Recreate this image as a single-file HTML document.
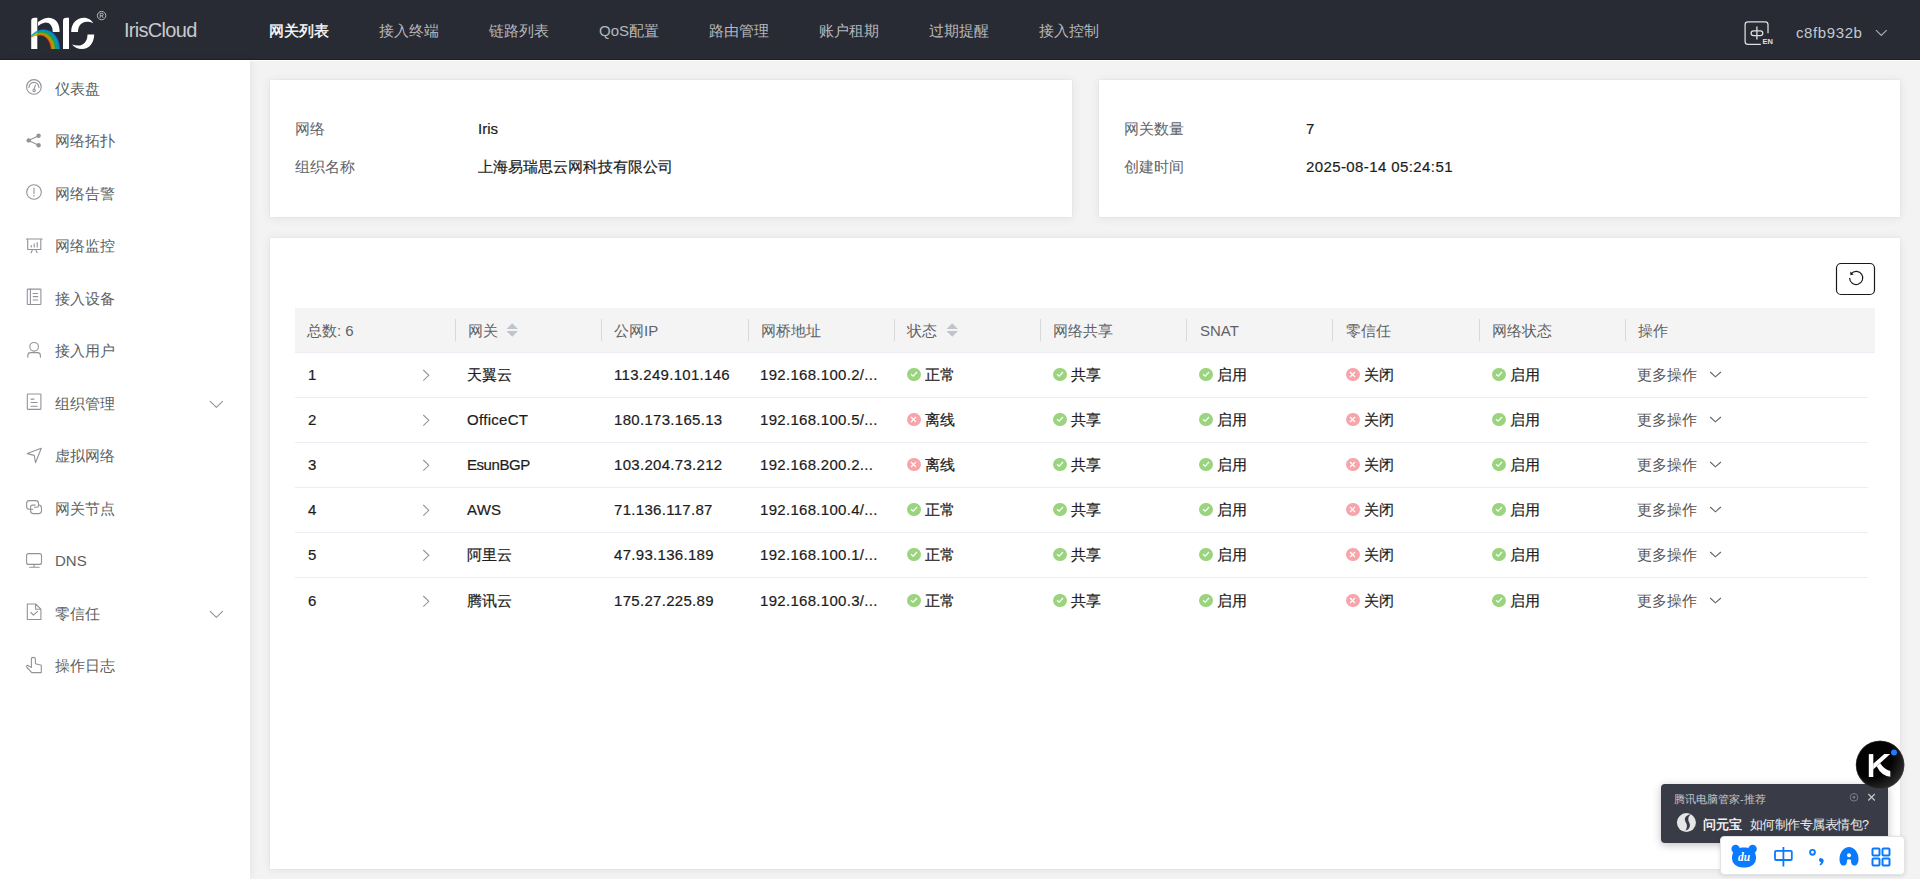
<!DOCTYPE html><html><head><meta charset="utf-8"><style>
*{box-sizing:border-box;margin:0;padding:0}
html,body{width:1920px;height:879px;overflow:hidden}
body{font-family:"Liberation Sans",sans-serif;font-size:15px;color:#303133;background:#f3f3f4;position:relative}
div,span{white-space:nowrap}
svg{position:absolute;overflow:visible}
#hdr{position:absolute;left:0;top:0;width:1920px;height:60px;background:#282b33;border-bottom:1px solid #1e2027}
#wl{position:absolute;left:250px;top:60px;width:1670px;height:1px;background:#fff}
#side{position:absolute;left:0;top:60px;width:250px;height:819px;background:#fff;box-shadow:2px 0 8px rgba(0,0,0,.06)}
.card{position:absolute;background:#fff;box-shadow:0 0 0 1px rgba(110,120,210,.045), 0 1px 10px rgba(0,0,0,.075)}
.t{position:absolute;height:20px;line-height:20px}
.lbl{color:#606266}
.val{color:#1c1c1c;-webkit-text-stroke:0.2px #1c1c1c}
.th{color:#606266}
.td{color:#1c1c1c;-webkit-text-stroke:0.2px #1c1c1c}
.sep{position:absolute;top:319px;width:1px;height:22px;background:#d9d9d9}
.rowb{position:absolute;left:295px;width:1573px;height:1px;background:#ebeef5}
.si{position:absolute;width:13.5px;height:13.5px;border-radius:50%}
.ok{background:#9bd47e}
.no{background:#f7a5aa}
</style></head><body>
<div id="hdr"></div><div id="wl"></div><div id="side"></div>
<div class="card" style="left:270px;top:80px;width:802px;height:137px"></div>
<div class="card" style="left:1099px;top:80px;width:801px;height:137px"></div>
<div class="card" style="left:270px;top:238px;width:1630px;height:631px"></div>
<svg style="left:0;top:0" width="120" height="60" viewBox="0 0 120 60">
<defs><radialGradient id="rb" cx="39" cy="47" r="21" gradientUnits="userSpaceOnUse">
<stop offset="0.56" stop-color="#ff4d00"/><stop offset="0.64" stop-color="#f39a00"/><stop offset="0.72" stop-color="#9cc41c"/><stop offset="0.8" stop-color="#22a845"/><stop offset="0.88" stop-color="#06a9c9"/><stop offset="0.95" stop-color="#0a8ee0"/><stop offset="1" stop-color="#1d3f9e"/></radialGradient></defs>
<g fill="#fff">
<path d="M31.2,49 L31.2,21 Q31.2,17.7 34.5,17.7 L37.3,17.7 L37.3,49 Z"/>
<path d="M38,32 L38,22 Q44,17.7 49,17.7 Q59.6,18.5 59.6,32 L52.8,32 Q52.5,22.5 45.5,22.5 Q41,23 38,26 Z"/>
<path d="M63,49 L63,21 Q63,17.7 66.3,17.7 L69,17.7 L69,49 Z"/>
<path d="M71.2,32 C71.2,23 77,17.7 84,17.7 C88,17.7 91.5,20 93.2,23.2 C91,22.2 89,21.8 87,21.8 C81.5,21.8 78,26 78,32 Z"/>
<path d="M94.2,34.5 C94.2,43 89,49 82,49 C77.5,49 74,47 72,44.5 C74,45.3 76,45.6 78,45.6 C84,45.6 87.5,41 87.5,34.5 Z"/>
</g>
<path d="M31.00,35.80 C35.00,31.00 40.00,29.40 44.00,29.40 C53.00,29.50 60.00,38.00 60.00,49.00 L59.35,49.00 C59.35,38.29 52.50,29.93 43.75,29.82 C39.75,29.81 34.89,31.36 31.00,35.91 Z" fill="#0f5bbc" stroke="#0f5bbc" stroke-width="0.15"/>
<path d="M31.00,35.91 C34.89,31.36 39.75,29.81 43.75,29.82 C52.50,29.93 59.35,38.29 59.35,49.00 L58.70,49.00 C58.70,38.57 52.00,30.36 43.50,30.24 C39.50,30.23 34.79,31.71 31.00,36.01 Z" fill="#0094e5" stroke="#0094e5" stroke-width="0.15"/>
<path d="M31.00,36.01 C34.79,31.71 39.50,30.23 43.50,30.24 C52.00,30.36 58.70,38.57 58.70,49.00 L58.05,49.00 C58.05,38.86 51.50,30.79 43.25,30.66 C39.25,30.64 34.68,32.07 31.00,36.12 Z" fill="#00a0e0" stroke="#00a0e0" stroke-width="0.15"/>
<path d="M31.00,36.12 C34.68,32.07 39.25,30.64 43.25,30.66 C51.50,30.79 58.05,38.86 58.05,49.00 L57.40,49.00 C57.40,39.14 51.00,31.21 43.00,31.09 C39.00,31.06 34.57,32.43 31.00,36.23 Z" fill="#00acdb" stroke="#00acdb" stroke-width="0.15"/>
<path d="M31.00,36.23 C34.57,32.43 39.00,31.06 43.00,31.09 C51.00,31.21 57.40,39.14 57.40,49.00 L56.75,49.00 C56.75,39.43 50.50,31.64 42.75,31.51 C38.75,31.47 34.46,32.79 31.00,36.34 Z" fill="#04b3c7" stroke="#04b3c7" stroke-width="0.15"/>
<path d="M31.00,36.34 C34.46,32.79 38.75,31.47 42.75,31.51 C50.50,31.64 56.75,39.43 56.75,49.00 L56.10,49.00 C56.10,39.71 50.00,32.07 42.50,31.93 C38.50,31.89 34.36,33.14 31.00,36.44 Z" fill="#13b090" stroke="#13b090" stroke-width="0.15"/>
<path d="M31.00,36.44 C34.36,33.14 38.50,31.89 42.50,31.93 C50.00,32.07 56.10,39.71 56.10,49.00 L55.45,49.00 C55.45,40.00 49.50,32.50 42.25,32.35 C38.25,32.30 34.25,33.50 31.00,36.55 Z" fill="#21ad59" stroke="#21ad59" stroke-width="0.15"/>
<path d="M31.00,36.55 C34.25,33.50 38.25,32.30 42.25,32.35 C49.50,32.50 55.45,40.00 55.45,49.00 L54.80,49.00 C54.80,40.29 49.00,32.93 42.00,32.77 C38.00,32.71 34.14,33.86 31.00,36.66 Z" fill="#3eb137" stroke="#3eb137" stroke-width="0.15"/>
<path d="M31.00,36.66 C34.14,33.86 38.00,32.71 42.00,32.77 C49.00,32.93 54.80,40.29 54.80,49.00 L54.15,49.00 C54.15,40.57 48.50,33.36 41.75,33.19 C37.75,33.13 34.04,34.21 31.00,36.76 Z" fill="#6bba29" stroke="#6bba29" stroke-width="0.15"/>
<path d="M31.00,36.76 C34.04,34.21 37.75,33.13 41.75,33.19 C48.50,33.36 54.15,40.57 54.15,49.00 L53.50,49.00 C53.50,40.86 48.00,33.79 41.50,33.61 C37.50,33.54 33.93,34.57 31.00,36.87 Z" fill="#98c31a" stroke="#98c31a" stroke-width="0.15"/>
<path d="M31.00,36.87 C33.93,34.57 37.50,33.54 41.50,33.61 C48.00,33.79 53.50,40.86 53.50,49.00 L52.85,49.00 C52.85,41.14 47.50,34.21 41.25,34.04 C37.25,33.96 33.82,34.93 31.00,36.98 Z" fill="#beb70f" stroke="#beb70f" stroke-width="0.15"/>
<path d="M31.00,36.98 C33.82,34.93 37.25,33.96 41.25,34.04 C47.50,34.21 52.85,41.14 52.85,49.00 L52.20,49.00 C52.20,41.43 47.00,34.64 41.00,34.46 C37.00,34.37 33.71,35.29 31.00,37.09 Z" fill="#e2a205" stroke="#e2a205" stroke-width="0.15"/>
<path d="M31.00,37.09 C33.71,35.29 37.00,34.37 41.00,34.46 C47.00,34.64 52.20,41.43 52.20,49.00 L51.55,49.00 C51.55,41.71 46.50,35.07 40.75,34.88 C36.75,34.79 33.61,35.64 31.00,37.19 Z" fill="#f78300" stroke="#f78300" stroke-width="0.15"/>
<path d="M31.00,37.19 C33.61,35.64 36.75,34.79 40.75,34.88 C46.50,35.07 51.55,41.71 51.55,49.00 L50.90,49.00 C50.90,42.00 46.00,35.50 40.50,35.30 C36.50,35.20 33.50,36.00 31.00,37.30 Z" fill="#fc5a00" stroke="#fc5a00" stroke-width="0.15"/>
<circle cx="101.6" cy="15.6" r="4.2" fill="none" stroke="#d0d0d0" stroke-width="0.85"/>
<path d="M100.2,18 L100.2,13.3 L102,13.3 Q103.2,13.3 103.2,14.55 Q103.2,15.8 102,15.8 L100.2,15.8 M101.9,15.8 L103.3,18" fill="none" stroke="#d0d0d0" stroke-width="0.75"/>
</svg>
<div class="t " style="left:124px;top:20.5px;font-size:20px;color:#c8c9cc;height:30px;line-height:30px;top:15px;letter-spacing:-0.7px">IrisCloud</div>
<div class="t " style="left:269px;top:21px;color:#fff;-webkit-text-stroke:0.35px #fff">网关列表</div>
<div class="t " style="left:379px;top:21px;color:#b6b8bd">接入终端</div>
<div class="t " style="left:489px;top:21px;color:#b6b8bd">链路列表</div>
<div class="t " style="left:599px;top:21px;color:#b6b8bd">QoS配置</div>
<div class="t " style="left:709px;top:21px;color:#b6b8bd">路由管理</div>
<div class="t " style="left:819px;top:21px;color:#b6b8bd">账户租期</div>
<div class="t " style="left:929px;top:21px;color:#b6b8bd">过期提醒</div>
<div class="t " style="left:1039px;top:21px;color:#b6b8bd">接入控制</div>
<svg style="left:1740px;top:18px" width="36" height="30" viewBox="1740 18 36 30">
<path d="M1760.8,44.3 L1748,44.3 Q1745.1,44.3 1745.1,41.4 L1745.1,24.6 Q1745.1,21.8 1748,21.8 L1765.1,21.8 Q1768,21.8 1768,24.6 L1768,33.2" fill="none" stroke="#e0e0e0" stroke-width="1.25"/>
<rect x="1751.1" y="30.8" width="11.7" height="4.8" rx="2.4" fill="none" stroke="#e0e0e0" stroke-width="1.25"/>
<line x1="1756.9" y1="26.4" x2="1756.9" y2="39.5" stroke="#e0e0e0" stroke-width="1.3"/>
<text x="1762.6" y="44.3" font-size="7.5" font-weight="bold" fill="#e0e0e0" font-family="Liberation Sans">EN</text>
</svg>
<div class="t " style="left:1796px;top:22.5px;color:#c5c8d0;letter-spacing:0.6px">c8fb932b</div>
<svg style="left:1870px;top:25px" width="20" height="15" viewBox="1870 25 20 15"><path d="M1876,30.2 L1881.3,35.4 L1886.7,30.2" fill="none" stroke="#a9b0c0" stroke-width="1.1"/></svg>
<div class="t " style="left:55px;top:79px;color:#5d5f63">仪表盘</div>
<div class="t " style="left:55px;top:131px;color:#5d5f63">网络拓扑</div>
<div class="t " style="left:55px;top:184px;color:#5d5f63">网络告警</div>
<div class="t " style="left:55px;top:236px;color:#5d5f63">网络监控</div>
<div class="t " style="left:55px;top:289px;color:#5d5f63">接入设备</div>
<div class="t " style="left:55px;top:341px;color:#5d5f63">接入用户</div>
<div class="t " style="left:55px;top:394px;color:#5d5f63">组织管理</div>
<div class="t " style="left:55px;top:446px;color:#5d5f63">虚拟网络</div>
<div class="t " style="left:55px;top:499px;color:#5d5f63">网关节点</div>
<div class="t " style="left:55px;top:550.5px;color:#5d5f63">DNS</div>
<div class="t " style="left:55px;top:604px;color:#5d5f63">零信任</div>
<div class="t " style="left:55px;top:656px;color:#5d5f63">操作日志</div>
<svg style="left:0;top:60px" width="250" height="640" viewBox="0 60 250 640">
<g fill="none" stroke="#919399" stroke-width="1.1" stroke-linecap="round" stroke-linejoin="round">
<circle cx="33.9" cy="86.9" r="7.3"/>
<path d="M29,87.5 A4.95,5.1 0 0 1 38.9,87.5"/><path d="M34,89.2 L35.4,85.1"/><circle cx="34.1" cy="90.4" r="1.2"/>
<path d="M38.6,135.7 L28.6,140.4 L38.6,145.3"/>
<circle cx="34" cy="192" r="7.3"/><path d="M34,188 L34,193.5"/>
<path d="M26.3,239 L42.2,239 M27.7,239 L27.7,249.5 L40.8,249.5 L40.8,239 M31.2,252.8 L32.5,249.6 M37,252.8 L35.7,249.6 M31.3,247 L31.3,245.5 M34.2,247 L34.2,243.8 M37.2,247 L37.2,242.5"/>
<rect x="27.3" y="289.1" width="13.6" height="15.4" rx="0.6"/><path d="M30.4,289.1 L30.4,304.5 M33.2,293.5 L37.7,293.5 M33.2,296.6 L37.7,296.6 M33.2,300 L37.7,300"/>
<circle cx="34.1" cy="346.8" r="4.3"/><path d="M27.8,357.3 L27.8,355.5 Q27.8,352.6 30.8,352.6 L37.4,352.6 Q40.4,352.6 40.4,355.5 L40.4,357.3"/>
<rect x="27.3" y="394" width="13.6" height="15.4" rx="0.6"/><path d="M31,399.1 L34,399.1 M31,402.5 L37.2,402.5 M31,406.2 L37.2,406.2"/>
<path d="M27.3,453.6 L41.3,448.2 L35.5,462.7 L34.2,455.4 Z"/>
<path d="M32.8,509.3 L29.5,509.3 Q26.6,509.3 26.6,506.4 L26.6,503.4 Q26.6,500.6 29.5,500.6 L35.6,500.6 Q38.5,500.6 38.5,503.4 L38.5,505.6 Q38.5,507.3 36.8,507.3 L34.5,507.3"/>
<path d="M35.2,505.1 L32.6,505.1 Q30.6,505.1 30.6,507.1 L30.6,510.8 Q30.6,513.6 33.4,513.6 L38.7,513.6 Q41.5,513.6 41.5,510.8 L41.5,508.2 Q41.5,505.6 39.3,505"/>
<rect x="26.6" y="553.6" width="14.9" height="10.8" rx="2"/><path d="M34,564.4 L34,567.3 M29.7,567.3 L39.2,567.3"/>
<path d="M27.3,604 L35.6,604 L40.9,609.2 L40.9,619.5 L27.3,619.5 Z M35.6,604 L35.6,609.2 L40.9,609.2"/><path d="M30.9,612.5 L33.5,615.2 L37.5,611.4"/>
<path d="M31.8,672.6 L27,667.5 Q26,666 27.5,665.3 L31.4,667.4 L31.4,659.2 Q31.4,657.4 33.5,657.4 Q35.4,657.4 35.4,659.2 L35.4,663.8 L41.3,665.2 L41.3,672.6 Z"/>
<path d="M210.2,401.3 L216.4,407.4 L222.5,401.3 M210.2,611.3 L216.4,617.4 L222.5,611.3"/>
</g>
<g fill="#919399"><circle cx="38.6" cy="135.8" r="2.2"/><circle cx="28.7" cy="140.4" r="2.2"/><circle cx="38.6" cy="145.2" r="2.2"/><circle cx="34" cy="195.8" r="0.8"/></g>
</svg>
<div class="t lbl" style="left:295px;top:119px;">网络</div>
<div class="t val" style="left:478px;top:118.5px;">Iris</div>
<div class="t lbl" style="left:295px;top:157px;">组织名称</div>
<div class="t val" style="left:478px;top:157px;">上海易瑞思云网科技有限公司</div>
<div class="t lbl" style="left:1124px;top:119px;">网关数量</div>
<div class="t val" style="left:1306px;top:118.5px;">7</div>
<div class="t lbl" style="left:1124px;top:157px;">创建时间</div>
<div class="t val" style="left:1306px;top:156.5px;letter-spacing:0.4px">2025-08-14 05:24:51</div>
<svg style="left:1830px;top:258px" width="52" height="42" viewBox="1830 258 52 42">
<rect x="1836.5" y="263.5" width="38" height="31" rx="4.5" fill="#fff" stroke="#1a1a1a" stroke-width="1.2"/>
<path d="M1849.6,278 A6.6,6.6 0 1 0 1851.2,273.6" fill="none" stroke="#1a1a1a" stroke-width="1.2"/>
<path d="M1850.2,271.6 L1850.4,275.2 L1853.7,274.6 Z" fill="#1a1a1a"/>
</svg>
<div style="position:absolute;left:295px;top:308px;width:1580px;height:44px;background:#f4f4f5"></div>
<div class="rowb" style="top:352px;width:1580px"></div>
<div class="t th" style="left:307px;top:321px;">总数: 6</div>
<div class="t th" style="left:468px;top:321px;">网关</div>
<div class="t th" style="left:614px;top:321px;">公网IP</div>
<div class="t th" style="left:761px;top:321px;">网桥地址</div>
<div class="t th" style="left:907px;top:321px;">状态</div>
<div class="t th" style="left:1053px;top:321px;">网络共享</div>
<div class="t th" style="left:1200px;top:320.5px;">SNAT</div>
<div class="t th" style="left:1346px;top:321px;">零信任</div>
<div class="t th" style="left:1492px;top:321px;">网络状态</div>
<div class="t th" style="left:1638px;top:321px;">操作</div>
<div class="sep" style="left:455px"></div>
<div class="sep" style="left:601px"></div>
<div class="sep" style="left:748px"></div>
<div class="sep" style="left:894px"></div>
<div class="sep" style="left:1040px"></div>
<div class="sep" style="left:1186px"></div>
<div class="sep" style="left:1332px"></div>
<div class="sep" style="left:1479px"></div>
<div class="sep" style="left:1625px"></div>
<svg style="left:506.3px;top:323px" width="13" height="14" viewBox="0 0 13 14"><path d="M0.5,5.9 L6.25,0.2 L12,5.9 Z M0.5,8.1 L6.25,13.8 L12,8.1 Z" fill="#c0c4cc"/></svg>
<svg style="left:945.8px;top:323px" width="13" height="14" viewBox="0 0 13 14"><path d="M0.5,5.9 L6.25,0.2 L12,5.9 Z M0.5,8.1 L6.25,13.8 L12,8.1 Z" fill="#c0c4cc"/></svg>
<div class="t td" style="left:308px;top:364.5px;">1</div>
<svg style="left:420px;top:366px" width="12" height="16" viewBox="0 0 12 16"><path d="M3.3,4 L8.8,9.3 L3.3,14.6" fill="none" stroke="#909399" stroke-width="1.05"/></svg>
<div class="t td" style="left:467px;top:365px;letter-spacing:0px">天翼云</div>
<div class="t td" style="left:614px;top:364.5px;letter-spacing:0.3px">113.249.101.146</div>
<div class="t td" style="left:760px;top:364.5px;letter-spacing:0.3px">192.168.100.2/...</div>
<div class="si ok" style="left:907px;top:367.5px"><svg style="left:2.8px;top:2.8px" width="8" height="8" viewBox="0 0 8 8"><path d="M1,4.2 L3.2,6.2 L7,2" fill="none" stroke="#fff" stroke-width="1.2"/></svg></div>
<div class="t td" style="left:925px;top:365px;">正常</div>
<div class="si ok" style="left:1053px;top:367.5px"><svg style="left:2.8px;top:2.8px" width="8" height="8" viewBox="0 0 8 8"><path d="M1,4.2 L3.2,6.2 L7,2" fill="none" stroke="#fff" stroke-width="1.2"/></svg></div>
<div class="t td" style="left:1071px;top:365px;">共享</div>
<div class="si ok" style="left:1199px;top:367.5px"><svg style="left:2.8px;top:2.8px" width="8" height="8" viewBox="0 0 8 8"><path d="M1,4.2 L3.2,6.2 L7,2" fill="none" stroke="#fff" stroke-width="1.2"/></svg></div>
<div class="t td" style="left:1217px;top:365px;">启用</div>
<div class="si no" style="left:1346px;top:367.5px"><svg style="left:3.25px;top:3.25px" width="7" height="7" viewBox="0 0 7 7"><path d="M1,1 L6,6 M6,1 L1,6" fill="none" stroke="#fff" stroke-width="1.1"/></svg></div>
<div class="t td" style="left:1364px;top:365px;">关闭</div>
<div class="si ok" style="left:1492px;top:367.5px"><svg style="left:2.8px;top:2.8px" width="8" height="8" viewBox="0 0 8 8"><path d="M1,4.2 L3.2,6.2 L7,2" fill="none" stroke="#fff" stroke-width="1.2"/></svg></div>
<div class="t td" style="left:1510px;top:365px;">启用</div>
<div class="t " style="left:1637px;top:365px;color:#555">更多操作</div>
<svg style="left:1705px;top:366px" width="20" height="16" viewBox="0 0 20 16"><path d="M5.2,6 L10.4,10.8 L15.9,6" fill="none" stroke="#606266" stroke-width="1.1"/></svg>
<div class="rowb" style="top:397px"></div>
<div class="t td" style="left:308px;top:409.5px;">2</div>
<svg style="left:420px;top:411px" width="12" height="16" viewBox="0 0 12 16"><path d="M3.3,4 L8.8,9.3 L3.3,14.6" fill="none" stroke="#909399" stroke-width="1.05"/></svg>
<div class="t td" style="left:467px;top:409.5px;letter-spacing:0.3px">OfficeCT</div>
<div class="t td" style="left:614px;top:409.5px;letter-spacing:0.3px">180.173.165.13</div>
<div class="t td" style="left:760px;top:409.5px;letter-spacing:0.3px">192.168.100.5/...</div>
<div class="si no" style="left:907px;top:412.5px"><svg style="left:3.25px;top:3.25px" width="7" height="7" viewBox="0 0 7 7"><path d="M1,1 L6,6 M6,1 L1,6" fill="none" stroke="#fff" stroke-width="1.1"/></svg></div>
<div class="t td" style="left:925px;top:410px;">离线</div>
<div class="si ok" style="left:1053px;top:412.5px"><svg style="left:2.8px;top:2.8px" width="8" height="8" viewBox="0 0 8 8"><path d="M1,4.2 L3.2,6.2 L7,2" fill="none" stroke="#fff" stroke-width="1.2"/></svg></div>
<div class="t td" style="left:1071px;top:410px;">共享</div>
<div class="si ok" style="left:1199px;top:412.5px"><svg style="left:2.8px;top:2.8px" width="8" height="8" viewBox="0 0 8 8"><path d="M1,4.2 L3.2,6.2 L7,2" fill="none" stroke="#fff" stroke-width="1.2"/></svg></div>
<div class="t td" style="left:1217px;top:410px;">启用</div>
<div class="si no" style="left:1346px;top:412.5px"><svg style="left:3.25px;top:3.25px" width="7" height="7" viewBox="0 0 7 7"><path d="M1,1 L6,6 M6,1 L1,6" fill="none" stroke="#fff" stroke-width="1.1"/></svg></div>
<div class="t td" style="left:1364px;top:410px;">关闭</div>
<div class="si ok" style="left:1492px;top:412.5px"><svg style="left:2.8px;top:2.8px" width="8" height="8" viewBox="0 0 8 8"><path d="M1,4.2 L3.2,6.2 L7,2" fill="none" stroke="#fff" stroke-width="1.2"/></svg></div>
<div class="t td" style="left:1510px;top:410px;">启用</div>
<div class="t " style="left:1637px;top:410px;color:#555">更多操作</div>
<svg style="left:1705px;top:411px" width="20" height="16" viewBox="0 0 20 16"><path d="M5.2,6 L10.4,10.8 L15.9,6" fill="none" stroke="#606266" stroke-width="1.1"/></svg>
<div class="rowb" style="top:442px"></div>
<div class="t td" style="left:308px;top:454.5px;">3</div>
<svg style="left:420px;top:456px" width="12" height="16" viewBox="0 0 12 16"><path d="M3.3,4 L8.8,9.3 L3.3,14.6" fill="none" stroke="#909399" stroke-width="1.05"/></svg>
<div class="t td" style="left:467px;top:454.5px;letter-spacing:-0.45px">EsunBGP</div>
<div class="t td" style="left:614px;top:454.5px;letter-spacing:0.3px">103.204.73.212</div>
<div class="t td" style="left:760px;top:454.5px;letter-spacing:0.3px">192.168.200.2...</div>
<div class="si no" style="left:907px;top:457.5px"><svg style="left:3.25px;top:3.25px" width="7" height="7" viewBox="0 0 7 7"><path d="M1,1 L6,6 M6,1 L1,6" fill="none" stroke="#fff" stroke-width="1.1"/></svg></div>
<div class="t td" style="left:925px;top:455px;">离线</div>
<div class="si ok" style="left:1053px;top:457.5px"><svg style="left:2.8px;top:2.8px" width="8" height="8" viewBox="0 0 8 8"><path d="M1,4.2 L3.2,6.2 L7,2" fill="none" stroke="#fff" stroke-width="1.2"/></svg></div>
<div class="t td" style="left:1071px;top:455px;">共享</div>
<div class="si ok" style="left:1199px;top:457.5px"><svg style="left:2.8px;top:2.8px" width="8" height="8" viewBox="0 0 8 8"><path d="M1,4.2 L3.2,6.2 L7,2" fill="none" stroke="#fff" stroke-width="1.2"/></svg></div>
<div class="t td" style="left:1217px;top:455px;">启用</div>
<div class="si no" style="left:1346px;top:457.5px"><svg style="left:3.25px;top:3.25px" width="7" height="7" viewBox="0 0 7 7"><path d="M1,1 L6,6 M6,1 L1,6" fill="none" stroke="#fff" stroke-width="1.1"/></svg></div>
<div class="t td" style="left:1364px;top:455px;">关闭</div>
<div class="si ok" style="left:1492px;top:457.5px"><svg style="left:2.8px;top:2.8px" width="8" height="8" viewBox="0 0 8 8"><path d="M1,4.2 L3.2,6.2 L7,2" fill="none" stroke="#fff" stroke-width="1.2"/></svg></div>
<div class="t td" style="left:1510px;top:455px;">启用</div>
<div class="t " style="left:1637px;top:455px;color:#555">更多操作</div>
<svg style="left:1705px;top:456px" width="20" height="16" viewBox="0 0 20 16"><path d="M5.2,6 L10.4,10.8 L15.9,6" fill="none" stroke="#606266" stroke-width="1.1"/></svg>
<div class="rowb" style="top:487px"></div>
<div class="t td" style="left:308px;top:499.5px;">4</div>
<svg style="left:420px;top:501px" width="12" height="16" viewBox="0 0 12 16"><path d="M3.3,4 L8.8,9.3 L3.3,14.6" fill="none" stroke="#909399" stroke-width="1.05"/></svg>
<div class="t td" style="left:467px;top:499.5px;letter-spacing:0.2px">AWS</div>
<div class="t td" style="left:614px;top:499.5px;letter-spacing:0.3px">71.136.117.87</div>
<div class="t td" style="left:760px;top:499.5px;letter-spacing:0.3px">192.168.100.4/...</div>
<div class="si ok" style="left:907px;top:502.5px"><svg style="left:2.8px;top:2.8px" width="8" height="8" viewBox="0 0 8 8"><path d="M1,4.2 L3.2,6.2 L7,2" fill="none" stroke="#fff" stroke-width="1.2"/></svg></div>
<div class="t td" style="left:925px;top:500px;">正常</div>
<div class="si ok" style="left:1053px;top:502.5px"><svg style="left:2.8px;top:2.8px" width="8" height="8" viewBox="0 0 8 8"><path d="M1,4.2 L3.2,6.2 L7,2" fill="none" stroke="#fff" stroke-width="1.2"/></svg></div>
<div class="t td" style="left:1071px;top:500px;">共享</div>
<div class="si ok" style="left:1199px;top:502.5px"><svg style="left:2.8px;top:2.8px" width="8" height="8" viewBox="0 0 8 8"><path d="M1,4.2 L3.2,6.2 L7,2" fill="none" stroke="#fff" stroke-width="1.2"/></svg></div>
<div class="t td" style="left:1217px;top:500px;">启用</div>
<div class="si no" style="left:1346px;top:502.5px"><svg style="left:3.25px;top:3.25px" width="7" height="7" viewBox="0 0 7 7"><path d="M1,1 L6,6 M6,1 L1,6" fill="none" stroke="#fff" stroke-width="1.1"/></svg></div>
<div class="t td" style="left:1364px;top:500px;">关闭</div>
<div class="si ok" style="left:1492px;top:502.5px"><svg style="left:2.8px;top:2.8px" width="8" height="8" viewBox="0 0 8 8"><path d="M1,4.2 L3.2,6.2 L7,2" fill="none" stroke="#fff" stroke-width="1.2"/></svg></div>
<div class="t td" style="left:1510px;top:500px;">启用</div>
<div class="t " style="left:1637px;top:500px;color:#555">更多操作</div>
<svg style="left:1705px;top:501px" width="20" height="16" viewBox="0 0 20 16"><path d="M5.2,6 L10.4,10.8 L15.9,6" fill="none" stroke="#606266" stroke-width="1.1"/></svg>
<div class="rowb" style="top:532px"></div>
<div class="t td" style="left:308px;top:544.5px;">5</div>
<svg style="left:420px;top:546px" width="12" height="16" viewBox="0 0 12 16"><path d="M3.3,4 L8.8,9.3 L3.3,14.6" fill="none" stroke="#909399" stroke-width="1.05"/></svg>
<div class="t td" style="left:467px;top:545px;letter-spacing:0px">阿里云</div>
<div class="t td" style="left:614px;top:544.5px;letter-spacing:0.3px">47.93.136.189</div>
<div class="t td" style="left:760px;top:544.5px;letter-spacing:0.3px">192.168.100.1/...</div>
<div class="si ok" style="left:907px;top:547.5px"><svg style="left:2.8px;top:2.8px" width="8" height="8" viewBox="0 0 8 8"><path d="M1,4.2 L3.2,6.2 L7,2" fill="none" stroke="#fff" stroke-width="1.2"/></svg></div>
<div class="t td" style="left:925px;top:545px;">正常</div>
<div class="si ok" style="left:1053px;top:547.5px"><svg style="left:2.8px;top:2.8px" width="8" height="8" viewBox="0 0 8 8"><path d="M1,4.2 L3.2,6.2 L7,2" fill="none" stroke="#fff" stroke-width="1.2"/></svg></div>
<div class="t td" style="left:1071px;top:545px;">共享</div>
<div class="si ok" style="left:1199px;top:547.5px"><svg style="left:2.8px;top:2.8px" width="8" height="8" viewBox="0 0 8 8"><path d="M1,4.2 L3.2,6.2 L7,2" fill="none" stroke="#fff" stroke-width="1.2"/></svg></div>
<div class="t td" style="left:1217px;top:545px;">启用</div>
<div class="si no" style="left:1346px;top:547.5px"><svg style="left:3.25px;top:3.25px" width="7" height="7" viewBox="0 0 7 7"><path d="M1,1 L6,6 M6,1 L1,6" fill="none" stroke="#fff" stroke-width="1.1"/></svg></div>
<div class="t td" style="left:1364px;top:545px;">关闭</div>
<div class="si ok" style="left:1492px;top:547.5px"><svg style="left:2.8px;top:2.8px" width="8" height="8" viewBox="0 0 8 8"><path d="M1,4.2 L3.2,6.2 L7,2" fill="none" stroke="#fff" stroke-width="1.2"/></svg></div>
<div class="t td" style="left:1510px;top:545px;">启用</div>
<div class="t " style="left:1637px;top:545px;color:#555">更多操作</div>
<svg style="left:1705px;top:546px" width="20" height="16" viewBox="0 0 20 16"><path d="M5.2,6 L10.4,10.8 L15.9,6" fill="none" stroke="#606266" stroke-width="1.1"/></svg>
<div class="rowb" style="top:577px"></div>
<div class="t td" style="left:308px;top:590.5px;">6</div>
<svg style="left:420px;top:592px" width="12" height="16" viewBox="0 0 12 16"><path d="M3.3,4 L8.8,9.3 L3.3,14.6" fill="none" stroke="#909399" stroke-width="1.05"/></svg>
<div class="t td" style="left:467px;top:591px;letter-spacing:0px">腾讯云</div>
<div class="t td" style="left:614px;top:590.5px;letter-spacing:0.3px">175.27.225.89</div>
<div class="t td" style="left:760px;top:590.5px;letter-spacing:0.3px">192.168.100.3/...</div>
<div class="si ok" style="left:907px;top:593.5px"><svg style="left:2.8px;top:2.8px" width="8" height="8" viewBox="0 0 8 8"><path d="M1,4.2 L3.2,6.2 L7,2" fill="none" stroke="#fff" stroke-width="1.2"/></svg></div>
<div class="t td" style="left:925px;top:591px;">正常</div>
<div class="si ok" style="left:1053px;top:593.5px"><svg style="left:2.8px;top:2.8px" width="8" height="8" viewBox="0 0 8 8"><path d="M1,4.2 L3.2,6.2 L7,2" fill="none" stroke="#fff" stroke-width="1.2"/></svg></div>
<div class="t td" style="left:1071px;top:591px;">共享</div>
<div class="si ok" style="left:1199px;top:593.5px"><svg style="left:2.8px;top:2.8px" width="8" height="8" viewBox="0 0 8 8"><path d="M1,4.2 L3.2,6.2 L7,2" fill="none" stroke="#fff" stroke-width="1.2"/></svg></div>
<div class="t td" style="left:1217px;top:591px;">启用</div>
<div class="si no" style="left:1346px;top:593.5px"><svg style="left:3.25px;top:3.25px" width="7" height="7" viewBox="0 0 7 7"><path d="M1,1 L6,6 M6,1 L1,6" fill="none" stroke="#fff" stroke-width="1.1"/></svg></div>
<div class="t td" style="left:1364px;top:591px;">关闭</div>
<div class="si ok" style="left:1492px;top:593.5px"><svg style="left:2.8px;top:2.8px" width="8" height="8" viewBox="0 0 8 8"><path d="M1,4.2 L3.2,6.2 L7,2" fill="none" stroke="#fff" stroke-width="1.2"/></svg></div>
<div class="t td" style="left:1510px;top:591px;">启用</div>
<div class="t " style="left:1637px;top:591px;color:#555">更多操作</div>
<svg style="left:1705px;top:592px" width="20" height="16" viewBox="0 0 20 16"><path d="M5.2,6 L10.4,10.8 L15.9,6" fill="none" stroke="#606266" stroke-width="1.1"/></svg>
<div style="position:absolute;left:1661px;top:784px;width:227px;height:59px;background:#393b46;border-radius:4px;box-shadow:0 2px 8px rgba(0,0,0,.25)"></div>
<div class="t " style="left:1674px;top:789px;font-size:11px;color:#c4c5ca">腾讯电脑管家-推荐</div>
<svg style="left:1845px;top:788px" width="35" height="18" viewBox="1845 788 35 18">
<circle cx="1854" cy="797.3" r="3.8" fill="none" stroke="#7b7e88" stroke-width="1"/><circle cx="1854" cy="797.3" r="1.3" fill="#7b7e88"/>
<path d="M1868.3,794 L1874.8,800.5 M1874.8,794 L1868.3,800.5" stroke="#c9cbd1" stroke-width="1.1"/>
</svg>
<svg style="left:1675px;top:812px" width="24" height="22" viewBox="1675 812 24 22">
<circle cx="1686.4" cy="822.6" r="9.5" fill="#e6e6e6"/>
<path d="M1691,814.3 C1686,815 1684,818 1685.2,821 C1686,823.5 1688.5,825 1685.5,830.8 C1690,829 1690.8,825.5 1689.2,822.5 C1688,820 1687.5,817 1691,814.3 Z" fill="#393b46"/>
</svg>
<div class="t " style="left:1703px;top:815px;font-size:12.6px;color:#f2f2f2;font-weight:bold">问元宝</div>
<div class="t " style="left:1750px;top:815px;font-size:12.6px;color:#ececec;letter-spacing:-0.55px">如何制作专属表情包?</div>
<svg style="left:1850px;top:735px" width="62" height="62" viewBox="1850 735 62 62">
<defs><radialGradient id="kg" cx="1872" cy="757" r="34" gradientUnits="userSpaceOnUse"><stop offset="0.6" stop-color="#030303"/><stop offset="1" stop-color="#2a2a2a"/></radialGradient></defs>
<circle cx="1880.1" cy="764.9" r="24.2" fill="url(#kg)"/>
<circle cx="1880.1" cy="764.9" r="23.9" fill="none" stroke="#555" stroke-width="0.7" opacity="0.6"/>
<g fill="#fff">
<rect x="1868.8" y="754.1" width="4.5" height="22.9"/>
<path d="M1873.2,763.8 L1884.3,754.1 L1890.2,754.1 L1873.2,769.4 Z"/>
<path d="M1876.6,766.3 L1880.2,763.2 Q1884.5,769.8 1890.3,771 L1890.3,776.8 Q1881.5,776 1876.6,766.3 Z"/>
</g>
<circle cx="1894" cy="752.4" r="3" fill="#1e7bff"/>
</svg>
<div style="position:absolute;left:1720px;top:836px;width:185px;height:39px;background:#fff;border-radius:4px;border:1px solid #e3e4e8;box-shadow:0 1px 4px rgba(0,0,0,.12)"></div>
<svg style="left:1720px;top:836px" width="184" height="38" viewBox="1720 836 184 38">
<g fill="#0a7bff">
<circle cx="1735.6" cy="849" r="4.2"/><circle cx="1752.6" cy="849" r="4.2"/>
<rect x="1732" y="847.5" width="24" height="20" rx="10" ry="9"/>
</g>
<text x="1744" y="860.5" font-size="11.5" font-style="italic" font-weight="bold" fill="#fff" text-anchor="middle" font-family="Liberation Serif">du</text>
<g fill="none" stroke="#0a7bff" stroke-width="2.2">
<rect x="1775" y="850.8" width="16.8" height="9.2" rx="1" stroke-width="1.8"/><path d="M1783.4,847 L1783.4,866.5" stroke-width="1.8"/>
<circle cx="1812.5" cy="852.3" r="2.4" stroke-width="1.9"/>
<rect x="1872.5" y="848.5" width="7" height="7" rx="1" stroke-width="2"/><rect x="1882.5" y="848.5" width="7" height="7" rx="1" stroke-width="2"/>
<rect x="1872.5" y="858.5" width="7" height="7" rx="1" stroke-width="2"/><rect x="1882.5" y="858.5" width="7" height="7" rx="1" stroke-width="2"/>
</g>
<path d="M1820.5,858 Q1824.5,858.5 1823.5,862 Q1822.5,864.5 1820.5,865.5 L1819.5,864.5 Q1821,863.3 1821,862.3 Q1819,862 1819,860 Q1819,858 1820.5,858 Z" fill="#0a7bff"/>
<path d="M1839.5,859 C1839.5,852 1844,847 1849,847 C1854,847 1858.5,852 1858.5,859 C1858.5,863 1857,865.6 1854.5,865.6 C1852,865.6 1851,863.5 1851,861 L1851,860 Q1849,858.3 1847,860 L1847,861 C1847,863.5 1846,865.6 1843.5,865.6 C1841,865.6 1839.5,863 1839.5,859 Z" fill="#0a7bff"/>
<circle cx="1849" cy="855.3" r="2" fill="#fff"/>
</svg>
</body></html>
